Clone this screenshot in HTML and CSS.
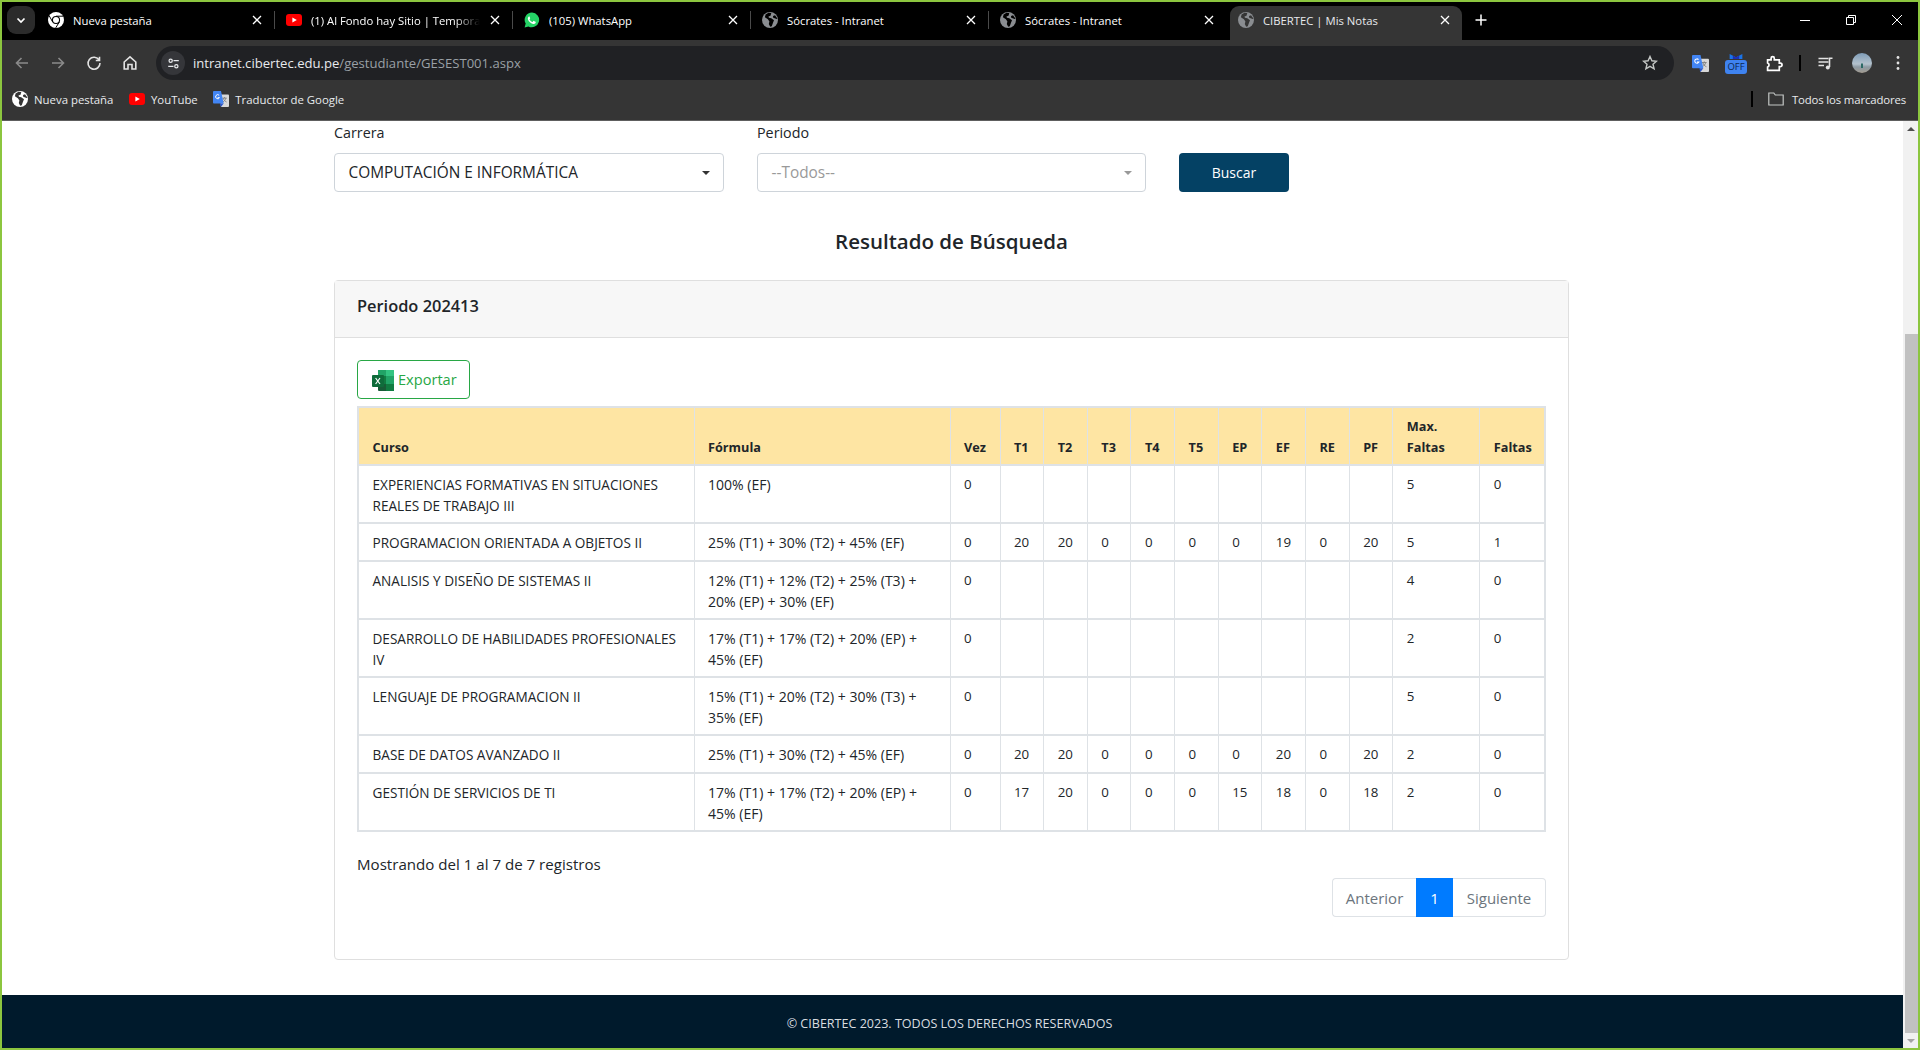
FILE: index.html
```html
<!DOCTYPE html>
<html lang="es">
<head>
<meta charset="utf-8">
<title>CIBERTEC | Mis Notas</title>
<link rel="stylesheet" href="styles.css">
</head>
<body>
<svg class="defs" width="0" height="0" aria-hidden="true">
  <symbol id="i-chrome" viewBox="0 0 16 16">
    <circle cx="8" cy="8" r="8" fill="#fff"/>
    <circle cx="8" cy="8" r="4.1" fill="#000"/>
    <circle cx="8" cy="8" r="3" fill="#fff"/>
    <path d="M8 4.2h7.2M4.7 10 1.2 3.8M11.3 10l-3.6 5.9" stroke="#000" stroke-width="1" fill="none"/>
  </symbol>
  <symbol id="i-yt" viewBox="0 0 16 12">
    <rect width="16" height="12" rx="3" fill="#f00"/>
    <path d="M6.4 3.4 10.8 6 6.4 8.6z" fill="#fff"/>
  </symbol>
  <symbol id="i-wa" viewBox="0 0 16 16">
    <path d="M8 .6a7.3 7.3 0 0 0-6.3 11L.6 15.400l3.900-1A7.300 7.300 0 1 0 8 .6z" fill="#25d366"/>
    <path d="M5.600 4.200c-.3 0-.7.100-1 .5-.4.500-.9 1.100-.7 2.200.3 1.300 1.200 2.600 2.400 3.700 1.200 1 2.600 1.600 3.600 1.500 1-.1 1.700-.8 1.800-1.500.1-.4 0-.7-.1-.8l-1.800-.9c-.2-.1-.4 0-.5.100l-.7.900c-.1.100-.3.200-.5.100-1.100-.5-2-1.300-2.600-2.400-.1-.2 0-.3.100-.4l.5-.7c.1-.2.1-.3 0-.5l-.7-1.500c-.1-.2-.2-.3-.4-.3z" fill="#fff"/>
  </symbol>
  <symbol id="i-globe" viewBox="0 0 16 16">
    <circle cx="8" cy="8" r="8" fill="currentColor"/>
    <path d="M6.500.7 3.600 2.600 2.900 5.300l3 1.900 1.500 2.200-.6 2.500 1.400 2.900 1.600-.5 1.100-3.400L12 8.300 9.300 6.200 6.900 5.800l-.4-1.300 2-.7L9.300.9zM13 3.200l-2 .9.200 1.600 3.500 1.200.7-.5z" fill="var(--cont,#000)"/>
  </symbol>
  <symbol id="i-translate" viewBox="0 0 18 18">
    <path d="M7 4h10a1 1 0 0 1 1 1v12a1 1 0 0 1-1 1H9z" fill="#d8d8d8"/>
    <path d="M10.500 8h5M13 6.800V8M11.500 8c.5 2 2 3.800 3.800 4.400M14.500 8c-.5 2-1.700 3.500-3.500 4.400" stroke="#777" stroke-width=".9" fill="none"/>
    <path d="M1 0h8l3 14H1a1 1 0 0 1-1-1V1a1 1 0 0 1 1-1z" fill="#4285f4"/>
    <path d="M6.900 4.800A2.300 2.300 0 1 0 7.300 7.500H5.200" stroke="#fff" stroke-width="1.100" fill="none"/>
    <path d="M9 18 7.500 14H12z" fill="#2a56c6"/>
  </symbol>
  <symbol id="i-excel" viewBox="0 0 22 21">
    <path d="M6 0h15a1 1 0 0 1 1 1v5H6z" fill="#21a366"/>
    <path d="M14 0h7a1 1 0 0 1 1 1v5h-8z" fill="#33c481"/>
    <rect x="6" y="6" width="8" height="8" fill="#107c41"/>
    <rect x="14" y="6" width="8" height="8" fill="#21a366"/>
    <path d="M6 14h8v7H7a1 1 0 0 1-1-1z" fill="#185c37"/>
    <rect x="14" y="14" width="8" height="7" fill="#107c41"/>
    <path d="M1 5h10a1 1 0 0 1 1 1v10a1 1 0 0 1-1 1H1a1 1 0 0 1-1-1V6a1 1 0 0 1 1-1z" fill="#0f6c3b"/>
    <path d="M3.600 8l4.400 6M8 8l-4.400 6" stroke="#fff" stroke-width="1.200" fill="none"/>
  </symbol>
</svg>

<div class="window">
  <header class="browser">
    <div class="tabstrip">
      <div class="tabsearch">
        <svg class="ico12" viewBox="0 0 12 12"><path d="M2.500 4.500 6 8l3.500-3.500" stroke="#fff" stroke-width="1.700" fill="none"/></svg>
      </div>
      <div class="tab sep"><svg class="fav"><use href="#i-chrome"/></svg><span class="tab-title">Nueva pestaña</span><span class="tab-x"><svg viewBox="0 0 10 10"><path d="M1 1l8 8M9 1l-8 8"/></svg></span></div>
      <div class="tab sep"><svg class="fav yt"><use href="#i-yt"/></svg><span class="tab-title fade">(1) Al Fondo hay Sitio | Tempora</span><span class="tab-x"><svg viewBox="0 0 10 10"><path d="M1 1l8 8M9 1l-8 8"/></svg></span></div>
      <div class="tab sep"><svg class="fav"><use href="#i-wa"/></svg><span class="tab-title">(105) WhatsApp</span><span class="tab-x"><svg viewBox="0 0 10 10"><path d="M1 1l8 8M9 1l-8 8"/></svg></span></div>
      <div class="tab sep"><svg class="fav globe"><use href="#i-globe"/></svg><span class="tab-title">Sócrates - Intranet</span><span class="tab-x"><svg viewBox="0 0 10 10"><path d="M1 1l8 8M9 1l-8 8"/></svg></span></div>
      <div class="tab"><svg class="fav globe"><use href="#i-globe"/></svg><span class="tab-title">Sócrates - Intranet</span><span class="tab-x"><svg viewBox="0 0 10 10"><path d="M1 1l8 8M9 1l-8 8"/></svg></span></div>
      <div class="tab active"><svg class="fav globe"><use href="#i-globe"/></svg><span class="tab-title">CIBERTEC | Mis Notas</span><span class="tab-x"><svg viewBox="0 0 10 10"><path d="M1 1l8 8M9 1l-8 8"/></svg></span></div>
      <div class="newtab"><svg viewBox="0 0 12 12"><path d="M6 .5v11M.5 6h11"/></svg></div>
      <div class="winctl">
        <span class="wc"><svg viewBox="0 0 12 12"><path d="M1 6.500h10"/></svg></span>
        <span class="wc"><svg viewBox="0 0 12 12"><path d="M1.500 3.500h7v7h-7zM3.500 3.500v-2h7v7h-2"/></svg></span>
        <span class="wc"><svg viewBox="0 0 12 12"><path d="M1 1l10 10M11 1 1 11"/></svg></span>
      </div>
    </div>

    <div class="toolbar">
      <span class="tb dim"><svg viewBox="0 0 16 16"><path d="M14 8H2.500M7.500 3 2.500 8l5 5"/></svg></span>
      <span class="tb dim"><svg viewBox="0 0 16 16"><path d="M2 8h11.500M8.500 3l5 5-5 5"/></svg></span>
      <span class="tb"><svg viewBox="0 0 16 16"><path d="M13.200 5.200A6 6 0 1 0 14 8M13.500 1.800v3.700H9.800"/></svg></span>
      <span class="tb"><svg viewBox="0 0 16 16"><path d="M2.200 14V7L8 1.800 13.800 7v7H10V9.500H6V14z"/></svg></span>
      <div class="omnibox">
        <span class="siteinfo"><svg viewBox="0 0 16 16"><path d="M8 4.500h6.500M1.500 11.500H8"/><circle cx="4.500" cy="4.500" r="2"/><circle cx="11.500" cy="11.500" r="2"/></svg></span>
        <span class="url"><span class="host">intranet.cibertec.edu.pe</span>/gestudiante/GESEST001.aspx</span>
        <span class="star"><svg viewBox="0 0 16 16"><path d="m8 1.500 1.900 4.300 4.600.4-3.500 3 1.100 4.600L8 11.300l-4.100 2.500L5 9.200l-3.500-3 4.600-.4z"/></svg></span>
      </div>
      <span class="ext"><svg class="ext-tr"><use href="#i-translate"/></svg></span>
      <span class="ext off-wrap">
        <svg class="off-top" viewBox="0 0 22 8"><path d="M1 0 11 5 21 0v8H1z" fill="#1a73e8"/><path d="M6 2.500 11 5l5-2.500V8H6z" fill="#1c2fb5"/></svg>
        <span class="off">OFF</span>
      </span>
      <span class="tb tb-puzzle"><svg viewBox="0 0 16 16"><path d="M1.500 4.500h3.300V3a1.500 1.500 0 0 1 3 0v1.500h4.700v3.200h1a1.600 1.600 0 0 1 0 3.200h-1v3.600H1.500v-3.200a2 2 0 0 0 0-3.800z"/></svg></span>
      <span class="tb-sep"></span>
      <span class="tb"><svg viewBox="0 0 16 16"><path d="M.5 3.500h10M.5 7h10M.5 10.500h5.500"/><path d="M11.500 12V3.200h3" /><circle class="solid" cx="9.800" cy="12.500" r="2"/></svg></span>
      <span class="tb">
        <svg class="avatar" viewBox="0 0 20 20"><defs><linearGradient id="sky" x1="0" y1="0" x2="0" y2="1"><stop offset="0" stop-color="#7f9db8"/><stop offset=".55" stop-color="#b4c2cd"/><stop offset=".7" stop-color="#8d9aa3"/><stop offset="1" stop-color="#a39b90"/></linearGradient></defs><circle cx="10" cy="10" r="10" fill="url(#sky)"/><rect x="9" y="10.500" width="2" height="4.500" fill="#2c6a66"/></svg>
      </span>
      <span class="tb"><svg viewBox="0 0 16 16"><circle class="solid" cx="8" cy="2.500" r="1.400"/><circle class="solid" cx="8" cy="8" r="1.400"/><circle class="solid" cx="8" cy="13.500" r="1.400"/></svg></span>
    </div>

    <div class="bookmarks">
      <span class="bm"><svg class="bm-ico bm-globe"><use href="#i-globe"/></svg>Nueva pestaña</span>
      <span class="bm"><svg class="bm-ico bm-yt"><use href="#i-yt"/></svg>YouTube</span>
      <span class="bm"><svg class="bm-ico"><use href="#i-translate"/></svg>Traductor de Google</span>
      <span class="bm-spacer"></span>
      <span class="bm-sep"></span>
      <span class="bm bm-all"><svg class="bm-folder" viewBox="0 0 16 14"><path d="M.8 1h5l1.500 2h7.900v10H.8z"/></svg>Todos los marcadores</span>
    </div>
  </header>

  <div class="viewport">
    <div class="page">
      <main class="content">
        <form class="filters">
          <div class="field">
            <label class="lbl">Carrera</label>
            <div class="select"><span>COMPUTACIÓN E INFORMÁTICA</span><i class="caret"></i></div>
          </div>
          <div class="field">
            <label class="lbl">Periodo</label>
            <div class="select disabled"><span>--Todos--</span><i class="caret"></i></div>
          </div>
          <button type="button" class="btn-search">Buscar</button>
        </form>

        <h2 class="title">Resultado de Búsqueda</h2>

        <section class="card">
          <div class="card-head">Periodo 202413</div>
          <div class="card-body">
            <button type="button" class="btn-export"><svg class="xl"><use href="#i-excel"/></svg>Exportar</button>
            <table class="grades">
              <colgroup>
                <col class="c-curso"><col class="c-form"><col class="c-vez">
                <col class="c-n"><col class="c-n"><col class="c-n"><col class="c-n"><col class="c-n"><col class="c-n"><col class="c-n"><col class="c-n"><col class="c-n">
                <col class="c-max"><col class="c-fal">
              </colgroup>
              <thead>
                <tr><th>Curso</th><th>Fórmula</th><th>Vez</th><th>T1</th><th>T2</th><th>T3</th><th>T4</th><th>T5</th><th>EP</th><th>EF</th><th>RE</th><th>PF</th><th>Max.<br>Faltas</th><th>Faltas</th></tr>
              </thead>
              <tbody>
                <tr><td>EXPERIENCIAS FORMATIVAS EN SITUACIONES<br>REALES DE TRABAJO III</td><td>100% (EF)</td><td>0</td><td></td><td></td><td></td><td></td><td></td><td></td><td></td><td></td><td></td><td>5</td><td>0</td></tr>
                <tr><td>PROGRAMACION ORIENTADA A OBJETOS II</td><td>25% (T1) + 30% (T2) + 45% (EF)</td><td>0</td><td>20</td><td>20</td><td>0</td><td>0</td><td>0</td><td>0</td><td>19</td><td>0</td><td>20</td><td>5</td><td>1</td></tr>
                <tr><td>ANALISIS Y DISEÑO DE SISTEMAS II</td><td>12% (T1) + 12% (T2) + 25% (T3) +<br>20% (EP) + 30% (EF)</td><td>0</td><td></td><td></td><td></td><td></td><td></td><td></td><td></td><td></td><td></td><td>4</td><td>0</td></tr>
                <tr><td>DESARROLLO DE HABILIDADES PROFESIONALES<br>IV</td><td>17% (T1) + 17% (T2) + 20% (EP) +<br>45% (EF)</td><td>0</td><td></td><td></td><td></td><td></td><td></td><td></td><td></td><td></td><td></td><td>2</td><td>0</td></tr>
                <tr><td>LENGUAJE DE PROGRAMACION II</td><td>15% (T1) + 20% (T2) + 30% (T3) +<br>35% (EF)</td><td>0</td><td></td><td></td><td></td><td></td><td></td><td></td><td></td><td></td><td></td><td>5</td><td>0</td></tr>
                <tr><td>BASE DE DATOS AVANZADO II</td><td>25% (T1) + 30% (T2) + 45% (EF)</td><td>0</td><td>20</td><td>20</td><td>0</td><td>0</td><td>0</td><td>0</td><td>20</td><td>0</td><td>20</td><td>2</td><td>0</td></tr>
                <tr><td>GESTIÓN DE SERVICIOS DE TI</td><td>17% (T1) + 17% (T2) + 20% (EP) +<br>45% (EF)</td><td>0</td><td>17</td><td>20</td><td>0</td><td>0</td><td>0</td><td>15</td><td>18</td><td>0</td><td>18</td><td>2</td><td>0</td></tr>
              </tbody>
            </table>
            <p class="info">Mostrando del 1 al 7 de 7 registros</p>
            <nav class="pager">
              <span class="pg pg-prev">Anterior</span><span class="pg pg-on">1</span><span class="pg pg-next">Siguiente</span>
            </nav>
          </div>
        </section>
      </main>
      <footer class="foot">© CIBERTEC 2023. TODOS LOS DERECHOS RESERVADOS</footer>
    </div>
    <aside class="scrollbar">
      <i class="sb-up"></i>
      <div class="sb-track"><div class="sb-thumb"></div></div>
      <i class="sb-down"></i>
    </aside>
  </div>
</div>
</body>
</html>
```

FILE: styles.css
```css
* { box-sizing: border-box; }
html, body { margin: 0; height: 100%; overflow: hidden; }
body { font-family: "Open Sans", "Noto Sans", sans-serif; color: #212529; background: #fff; }
.defs { position: absolute; }

.window { height: 1050px; border: 2px solid #8cc63f; display: flex; flex-direction: column; background: #fff; overflow: hidden; }

/* browser chrome */
.browser { flex: none; height: 119px; background: #353535; border-bottom: 1px solid #5e5e5e; color: #fff; }
.tabstrip { height: 38px; background: #000; display: flex; align-items: flex-end; }
.tabsearch { width: 28px; height: 28px; margin: 0 2px 6px 5px; border-radius: 9px; background: #2b2b2b; display: flex; align-items: center; justify-content: center; flex: none; }
.ico12 { width: 12px; height: 12px; }
.tab { flex: none; width: 238px; height: 34px; padding: 0 9px 6px 11px; display: flex; align-items: center; position: relative; font-size: 11.3px; }
.tab.sep::after { content: ""; position: absolute; right: 0; top: 5px; height: 18px; width: 1px; background: #4a4a4a; }
.tab.active { width: 232px; margin: 0 3px; padding-left: 8px; padding-right: 8px; background: #353535; border-radius: 9px 9px 0 0; color: #e8eaed; }
.fav { width: 16px; height: 16px; flex: none; margin-right: 9px; }
.fav.yt { height: 12px; }
.fav.globe { color: #8a8d91; --cont: #000; }
.active .fav.globe { --cont: #353535; }
.tab-title { flex: 1; white-space: nowrap; overflow: hidden; }
.tab-title.fade { -webkit-mask-image: linear-gradient(90deg, #000 85%, transparent 100%); mask-image: linear-gradient(90deg, #000 85%, transparent 100%); }
.tab-x { width: 10px; height: 10px; flex: none; margin: 0 4px 0 10px; display: flex; }
.tab-x svg { width: 10px; height: 10px; stroke: #fff; stroke-width: 1.300; fill: none; }
.newtab { width: 12px; height: 12px; margin: 0 0 14px 10px; flex: none; display: flex; }
.newtab svg { stroke: #fff; stroke-width: 1.500; fill: none; }
.winctl { margin-left: auto; align-self: flex-start; display: flex; padding-top: 12px; margin-right: -2px; }
.wc { width: 46px; height: 12px; display: flex; justify-content: center; }
.wc svg { width: 12px; height: 12px; stroke: #fff; stroke-width: 1; fill: none; }

.toolbar { height: 45px; padding: 6px 2px 5px 2px; display: flex; align-items: center; border-radius: 8px 8px 0 0; }
.tb { width: 36px; height: 34px; flex: none; display: flex; align-items: center; justify-content: center; }
.tb svg { width: 16px; height: 16px; fill: none; stroke: #e3e3e3; stroke-width: 1.600; }
.tb .solid { fill: #e3e3e3; stroke: none; }
.tb.dim svg { stroke: #8a8a8a; }
.tb svg.avatar { width: 20px; height: 20px; stroke: none; }
.tb-puzzle svg { width: 17px; height: 17px; stroke: #fff; }
.omnibox { flex: 1; height: 34px; margin: 0 8px; background: #202124; border-radius: 17px; display: flex; align-items: center; padding: 0 16px 0 5px; }
.siteinfo { width: 24px; height: 24px; border-radius: 50%; background: #35363a; display: flex; align-items: center; justify-content: center; flex: none; }
.siteinfo svg { width: 13px; height: 13px; fill: none; stroke: #e8eaed; stroke-width: 1.500; }
.url { flex: 1; margin-left: 8px; font-size: 13.1px; color: #9aa0a6; }
.host { color: #e8eaed; }
.star { width: 16px; height: 16px; display: flex; }
.star svg { fill: none; stroke: #c4c7c5; stroke-width: 1.400; }
.ext { width: 36px; height: 34px; flex: none; display: flex; align-items: center; justify-content: center; }
.ext-tr { width: 17px; height: 17px; }
.off-wrap { flex-direction: column; margin-right: 2px; }
.off-top { width: 14px; height: 7px; display: block; }
.off { display: block; width: 22px; height: 14px; line-height: 14px; background: #3f83f0; border-radius: 3px; color: #0d2850; font-size: 9.500px; text-align: center; }
.tb-sep { width: 2px; height: 16px; background: #000; margin: 0 7px; flex: none; }

.bookmarks { height: 35px; padding: 0 12px 7px 10px; display: flex; align-items: center; font-size: 11.4px; color: #e8eaed; }
.bm { display: flex; align-items: center; white-space: nowrap; margin-right: 15.500px; }
.bm-all { margin-right: 0; letter-spacing: -.15px; }
.bm-ico { width: 16px; height: 16px; margin-right: 6px; flex: none; }
.bm-globe { color: #fff; --cont: #353535; }
.bm-yt { height: 12px; }
.bm-spacer { flex: 1; }
.bm-sep { width: 2px; height: 16px; background: #000; margin-right: 15px; }
.bm-folder { width: 16px; height: 14px; margin-right: 8px; fill: none; stroke: #c4c7c5; stroke-width: 1.200; }

/* page */
.viewport { flex: 1; display: flex; min-height: 0; }
.page { flex: 1; min-width: 0; display: flex; flex-direction: column; }
.content { flex: 1; padding-left: 332px; }
.filters { display: flex; align-items: flex-end; }
.field { margin-right: 33px; }
.lbl { display: block; height: 22px; line-height: 23px; margin-bottom: 10px; font-size: 14.3px; }
.select { width: 390px; height: 39px; border: 1px solid #ced4da; border-radius: 4px; padding: 0 14px 0 13.500px; display: flex; align-items: center; justify-content: space-between; font-size: 15.400px; background: #fff; }
.field + .field .select { width: 389px; }
.select.disabled { color: #999; }
.caret { width: 0; height: 0; border-left: 4px solid transparent; border-right: 4px solid transparent; border-top: 4px solid #333; margin-right: -1px; }
.disabled .caret { border-top-color: #999; }
.btn-search { width: 110px; height: 39px; background: #044164; color: #fff; border: 0; border-radius: 4px; font: inherit; font-size: 14px; }

.title { width: 1235px; margin: 34px 0 24px; height: 30px; line-height: 30px; text-align: center; font-size: 20.500px; font-weight: 600; }

.card { width: 1235px; height: 680px; border: 1px solid #dfdfdf; border-radius: 4px; }
.card-head { height: 57px; line-height: 49px; padding-left: 22px; background: #f7f7f7; border-bottom: 1px solid #dfdfdf; font-size: 16.400px; font-weight: 600; }
.card-body { padding: 22px 22px 0; }
.btn-export { height: 39px; width: 113px; padding: 0 0 2px 14px; display: flex; align-items: center; background: #fff; border: 1px solid #28a745; border-radius: 4px; color: #28a745; font: inherit; font-size: 14.600px; }
.xl { width: 22px; height: 21px; margin: 4px 4px 0 0; flex: none; }

.grades { width: 1188px; margin-top: 7px; table-layout: fixed; border-collapse: collapse; font-size: 13.300px; line-height: 21px; }
.c-curso { width: 336px; }
.c-form { width: 256px; }
.c-vez { width: 50px; }
.c-n { width: 43.65px; }
.c-max { width: 87px; }
.c-fal { width: 65px; }
.grades th, .grades td { padding: 7.500px 0 6.500px 13.500px; text-align: left; vertical-align: top; border: solid #dee2e6; border-width: 2px 1px; height: 38px; white-space: nowrap; }
.grades th { background: #fee5a3; vertical-align: bottom; font-weight: 700; font-size: 12.700px; }
.grades td:nth-child(1) { font-size: 13.600px; }
.grades td:nth-child(2) { font-size: 14.050px; }
.grades tr > :first-child { border-left-width: 2px; }
.grades tr > :last-child { border-right-width: 2px; }

.info { margin: 20px 0 0; height: 24px; line-height: 24px; font-size: 15.100px; }
.pager { display: flex; justify-content: flex-end; margin-top: 2px; height: 39px; font-size: 15px; color: #6c757d; }
.pg { display: flex; align-items: center; justify-content: center; border: 1px solid #dee2e6; }
.pg-prev { width: 84px; border-radius: 4px 0 0 4px; border-right: 0; }
.pg-on { width: 37px; background: #007bff; border-color: #007bff; color: #fff; }
.pg-next { width: 93px; border-radius: 0 4px 4px 0; border-left: 0; }

.foot { flex: none; height: 53px; padding: 4px 6px 0 0; line-height: 50px; background: #001a2c; color: #d9dde0; text-align: center; font-size: 12.550px; }

/* scrollbar */
.scrollbar { flex: none; width: 15px; background: #f1f1f1; display: flex; flex-direction: column; align-items: center; }
.sb-up, .sb-down { flex: none; width: 0; height: 0; border-left: 4px solid transparent; border-right: 4px solid transparent; margin: 6px 0; }
.sb-up { border-bottom: 4px solid #505050; }
.sb-down { border-top: 4px solid #a3a3a3; }
.sb-track { flex: 1; width: 100%; padding: 197px 0 0 2px; }
.sb-thumb { height: 699px; background: #c1c1c1; }
```
